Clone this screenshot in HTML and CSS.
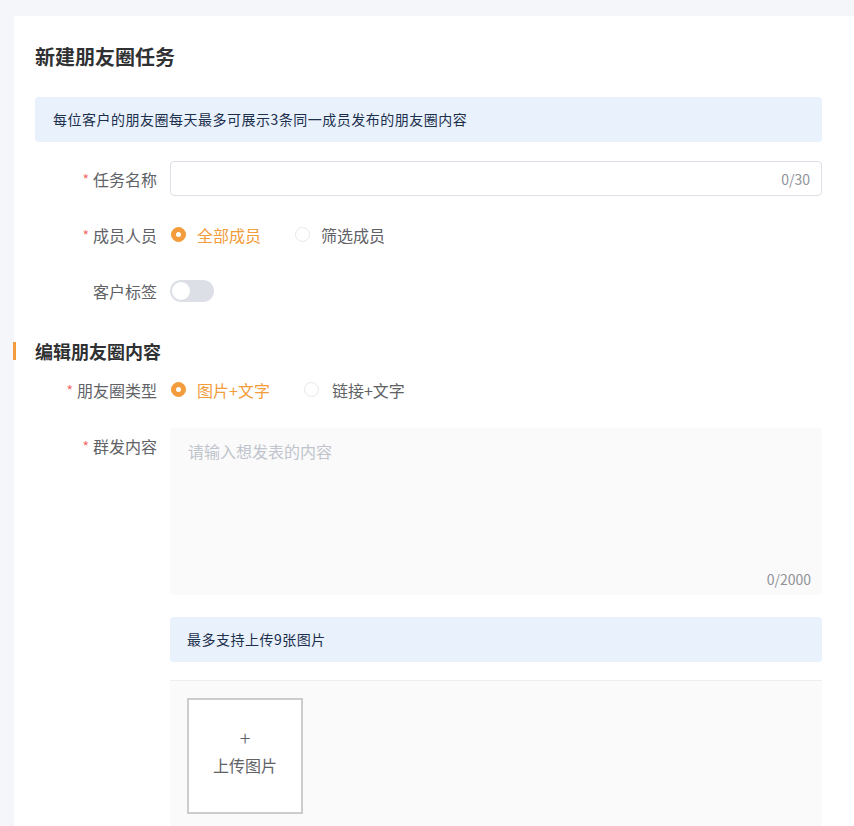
FILE: index.html
```html
<!DOCTYPE html>
<html lang="zh">
<head>
<meta charset="utf-8">
<link rel="stylesheet" href="styles.css">
</head>
<body>
<div class="card">
  <h1 class="title">新建朋友圈任务</h1>
  <div class="notice">每位客户的朋友圈每天最多可展示3条同一成员发布的朋友圈内容</div>

  <div class="row">
    <div class="label"><span class="req">*</span>任务名称</div>
    <div class="field">
      <div class="input"><span class="count">0/30</span></div>
    </div>
  </div>

  <div class="row">
    <div class="label"><span class="req">*</span>成员人员</div>
    <div class="field radios">
      <span class="radio on"><i></i>全部成员</span>
      <span class="radio"><i></i>筛选成员</span>
    </div>
  </div>

  <div class="row">
    <div class="label">客户标签</div>
    <div class="field">
      <span class="switch"><i></i></span>
    </div>
  </div>

  <h2 class="section">编辑朋友圈内容</h2>

  <div class="row row-type">
    <div class="label"><span class="req">*</span>朋友圈类型</div>
    <div class="field radios">
      <span class="radio on"><i></i>图片+文字</span>
      <span class="radio wide"><i></i>链接+文字</span>
    </div>
  </div>

  <div class="row row-top">
    <div class="label"><span class="req">*</span>群发内容</div>
    <div class="field col">
      <div class="textarea">
        <span class="ph">请输入想发表的内容</span>
        <span class="count2">0/2000</span>
      </div>
      <div class="notice small">最多支持上传9张图片</div>
      <div class="upload-area">
        <div class="upload">
          <span class="plus">+</span>
          <span>上传图片</span>
        </div>
      </div>
    </div>
  </div>
</div>
</body>
</html>
```

FILE: styles.css
```css
* { box-sizing: border-box; }
html, body {
  margin: 0;
  padding: 0;
  background: #f5f6fa;
  height: 826px;
  overflow: hidden;
}
body {
  padding: 16px 0 0 14px;
  font-family: "Noto Sans CJK SC", "Noto Sans", sans-serif;
  color: #606266;
  font-size: 16px;
}
.card {
  background: #fff;
  padding: 26px 32px 0 21px;
  min-height: 900px;
}
.title {
  margin: 0 0 25px;
  font-size: 20px;
  line-height: 30px;
  font-weight: 700;
  color: #303133;
}
.notice {
  background: #e8f1fc;
  border-radius: 4px;
  height: 45px;
  line-height: 45px;
  padding: 0 18px;
  font-size: 14px;
  letter-spacing: 0.5px;
  color: #1c2f4d;
  margin-bottom: 19px;
}
.notice.small {
  padding: 0 17px;
  margin: 22px 0 18px;
}
.row {
  display: flex;
  align-items: center;
  margin-bottom: 21px;
}
.row-top { align-items: flex-start; }
.label {
  width: 135px;
  height: 35px;
  flex: none;
  display: flex;
  align-items: center;
  justify-content: flex-end;
  padding-right: 13px;
  font-size: 16px;
  line-height: 20px;
  color: #606266;
}
.req {
  color: #f56c6c;
  margin-right: 4px;
  font-size: 14px;
}
.field {
  flex: 1;
  display: flex;
  align-items: center;
  height: 35px;
}
.field.col {
  flex-direction: column;
  align-items: stretch;
  height: auto;
}
.input {
  flex: 1;
  height: 35px;
  border: 1px solid #dcdfe6;
  border-radius: 4px;
  display: flex;
  align-items: center;
  justify-content: flex-end;
  padding-right: 11px;
}
.count {
  font-size: 14px;
  color: #909399;
}
.radio {
  display: inline-flex;
  align-items: center;
  color: #606266;
  margin-right: 33px;
  font-size: 16px;
  line-height: 20px;
}
.radio i {
  width: 15px;
  height: 15px;
  border-radius: 50%;
  border: 1px solid #e4e7ed;
  background: #fff;
  margin: 0 11px 0 1px;
  flex: none;
}
.radio.on { color: #f39c3c; }
.radio.on i {
  background: #f39c3c;
  border-color: #f39c3c;
  position: relative;
}
.radio.on i::after {
  content: "";
  position: absolute;
  width: 5px;
  height: 5px;
  border-radius: 50%;
  background: #fff;
  left: 4px;
  top: 4px;
}
.row-type .radio.wide i { margin-right: 13px; }
.switch {
  width: 44px;
  height: 22px;
  border-radius: 11px;
  background: #dcdfe6;
  display: inline-flex;
  align-items: center;
  padding: 2px;
}
.switch i {
  width: 18px;
  height: 18px;
  border-radius: 50%;
  background: #fff;
}
.section {
  margin: 34px 0 12px -22px;
  border-left: 3px solid #f39c3c;
  padding-left: 19px;
  font-size: 18px;
  font-weight: 700;
  line-height: 18px;
  color: #303133;
}
.textarea {
  height: 167px;
  background: #fafafa;
  border-radius: 4px;
  display: flex;
  flex-direction: column;
  justify-content: space-between;
  padding: 13px 11px 6px 18px;
}
.ph {
  color: #c0c4cc;
  font-size: 16px;
  line-height: 20px;
}
.count2 {
  align-self: flex-end;
  font-size: 14px;
  line-height: 20px;
  color: #909399;
}
.upload-area {
  background: #fafafa;
  border-top: 1px solid #eeeeee;
  padding: 17px;
  height: 200px;
}
.upload {
  width: 116px;
  height: 116px;
  background: #fff;
  border: 2px solid #cccccc;
  display: flex;
  flex-direction: column;
  align-items: center;
  justify-content: center;
  color: #606266;
  font-size: 16px;
  line-height: 22px;
  padding-bottom: 10px;
}
.plus {
  font-size: 20px;
  font-weight: 300;
  line-height: 22px;
  color: #606266;
  margin-bottom: 5px;
}
```
